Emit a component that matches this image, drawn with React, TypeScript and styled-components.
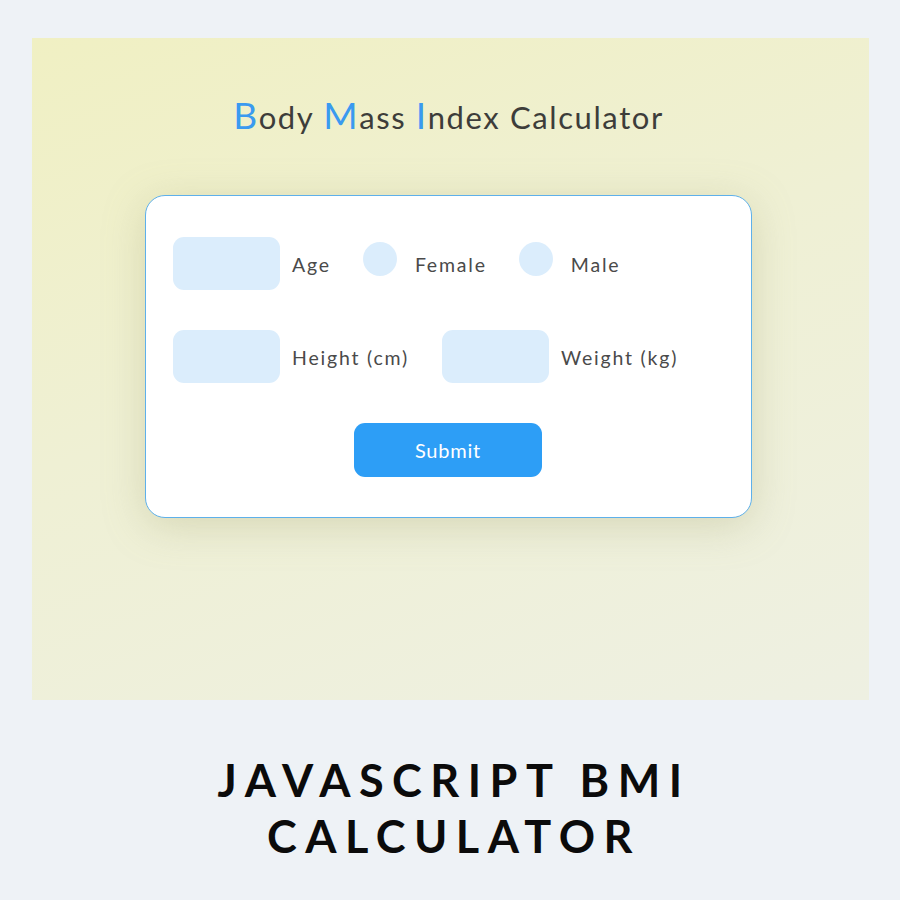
import React from "react";
import styled, { createGlobalStyle } from "styled-components";

const Global = createGlobalStyle`
  html, body { margin: 0; padding: 0; background: #eef2f6; }
  body { font-family: "Lato", "Noto Sans", sans-serif; }
`;

const Page = styled.div`
  width: 900px;
  height: 900px;
  display: flex;
  flex-direction: column;
  align-items: center;
`;

const Panel = styled.div`
  margin-top: 38px;
  width: 837px;
  height: 662px;
  margin-left: 1px;
  background: linear-gradient(160deg, #f0f0c3 0%, #eff0d4 45%, #eef0e2 100%);
  display: flex;
  flex-direction: column;
  align-items: center;
  box-sizing: border-box;
  padding-top: 52px;
`;

const Title = styled.h1`
  margin: 0;
  font-family: "Lato", sans-serif;
  font-weight: 400;
  font-size: 31px;
  line-height: 50px;
  color: #3d3d3a;
  letter-spacing: 1.6px;
  margin-left: -4px;
`;

const Cap = styled.span`
  color: #3a9af0;
  font-size: 37px;
`;

const Card = styled.form`
  margin-top: 53px;
  margin-left: -4px;
  width: 607px;
  box-sizing: border-box;
  background: #fff;
  border: 1px solid #5eb0ea;
  border-radius: 20px;
  box-shadow: 0 8px 40px rgba(170, 170, 120, 0.35);
  padding: 41px 27px 40px;
  display: flex;
  flex-direction: column;
  gap: 41px;
`;

const Row = styled.div`
  display: flex;
  align-items: center;
  height: 52px;
`;

const Input = styled.div<{ $gap?: number }>`
  width: 107px;
  height: 53px;
  border-radius: 11px;
  background: #dbedfc;
  flex-shrink: 0;
  margin-left: ${(p) => p.$gap ?? 0}px;
`;

const Label = styled.span<{ $left: number }>`
  margin-left: ${(p) => p.$left}px;
  font-family: "Lato", sans-serif;
  font-size: 19.5px;
  color: #4a4a4a;
  letter-spacing: 1.8px;
  padding-top: 2px;
`;

const Radio = styled.div<{ $left: number }>`
  margin-left: ${(p) => p.$left}px;
  width: 34px;
  height: 34px;
  border-radius: 50%;
  background: #dbedfc;
  flex-shrink: 0;
  margin-top: -9px;
`;

const ButtonRow = styled.div`
  display: flex;
  justify-content: center;
`;

const Submit = styled.button`
  width: 188px;
  height: 54px;
  border: none;
  border-radius: 11px;
  background: #2d9ef6;
  color: #fff;
  font-family: "Lato", sans-serif;
  font-size: 20px;
  letter-spacing: 0.8px;
  margin-left: -1px;
`;

const Caption = styled.div`
  margin-top: 52px;
  font-family: "Lato", sans-serif;
  font-weight: 700;
  font-size: 45px;
  line-height: 56px;
  letter-spacing: 8.5px;
  color: #0b0b0b;
  text-align: center;
  margin-left: 8px;
`;

export default function App() {
  return (
    <>
      <Global />
      <Page>
        <Panel>
          <Title>
            <Cap>B</Cap>ody <Cap>M</Cap>ass <Cap>I</Cap>ndex Calculator
          </Title>
          <Card onSubmit={(e) => e.preventDefault()}>
            <Row>
              <Input />
              <Label $left={12}>Age</Label>
              <Radio $left={32} />
              <Label $left={18}>Female</Label>
              <Radio $left={32} />
              <Label $left={18}>Male</Label>
            </Row>
            <Row>
              <Input />
              <Label $left={12}>Height (cm)</Label>
              <Input $gap={33} />
              <Label $left={12}>Weight (kg)</Label>
            </Row>
            <ButtonRow>
              <Submit type="submit">Submit</Submit>
            </ButtonRow>
          </Card>
        </Panel>
        <Caption>
          JAVASCRIPT BMI
          <br />
          CALCULATOR
        </Caption>
      </Page>
    </>
  );
}
